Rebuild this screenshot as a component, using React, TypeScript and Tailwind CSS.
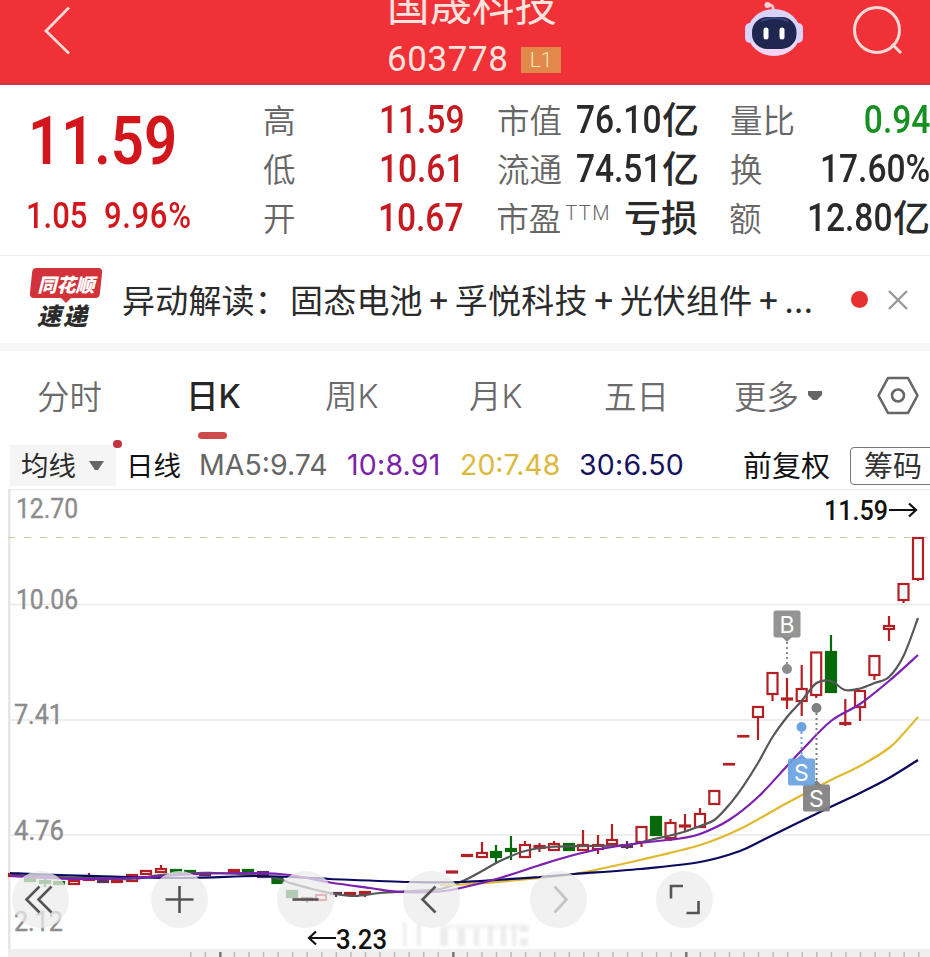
import { Fragment } from "react";
import type { ReactNode } from "react";

type Candle = {
  x: number;
  top: number;
  bottom: number;
  high?: number;
  low?: number;
  color?: "red" | "green" | "dark";
};

const candles: Candle[] = [
  { x: 14, top: 873, bottom: 876 },
  { x: 30, top: 878, bottom: 881, color: "green" },
  { x: 45, top: 880, bottom: 883, high: 877, low: 887, color: "green" },
  { x: 59, top: 881, bottom: 884, color: "green" },
  { x: 74, top: 880, bottom: 884 },
  { x: 89, top: 876, bottom: 880, high: 873 },
  { x: 103, top: 879, bottom: 882, color: "dark" },
  { x: 117, top: 880, bottom: 882 },
  { x: 132, top: 874, bottom: 881 },
  { x: 146, top: 870, bottom: 874 },
  { x: 161, top: 868, bottom: 872, high: 865 },
  { x: 176, top: 869, bottom: 872, color: "green" },
  { x: 190, top: 870, bottom: 874, color: "green" },
  { x: 205, top: 872, bottom: 875, color: "dark" },
  { x: 234, top: 869, bottom: 872 },
  { x: 248, top: 869, bottom: 873, color: "green" },
  { x: 263, top: 871, bottom: 877, color: "dark" },
  { x: 277.5, top: 877, bottom: 883, color: "green" },
  { x: 292, top: 890, bottom: 897, color: "green" },
  { x: 307, top: 898, bottom: 900, low: 903, color: "dark" },
  { x: 321, top: 894, bottom: 900 },
  { x: 336, top: 893, bottom: 894, low: 897, color: "dark" },
  { x: 350, top: 892, bottom: 895 },
  { x: 365, top: 891, bottom: 894, low: 897 },
  { x: 452, top: 871.5, bottom: 872.5 },
  { x: 467, top: 855, bottom: 856 },
  { x: 482, top: 852, bottom: 857, high: 842 },
  { x: 496, top: 851, bottom: 857, high: 845, low: 863, color: "green" },
  { x: 511, top: 848, bottom: 851, high: 836, low: 860, color: "green" },
  { x: 525, top: 844, bottom: 857, high: 841, low: 858 },
  { x: 539.5, top: 846, bottom: 848, high: 843, low: 852 },
  { x: 554, top: 843, bottom: 850, high: 841 },
  { x: 569, top: 843, bottom: 850, color: "green" },
  { x: 583, top: 844, bottom: 850, high: 830 },
  { x: 598, top: 844, bottom: 849, high: 835, low: 854 },
  { x: 612, top: 839, bottom: 844, high: 824 },
  { x: 627, top: 845, bottom: 847, high: 841, low: 849, color: "dark" },
  { x: 641.5, top: 826, bottom: 842, low: 847 },
  { x: 656, top: 816, bottom: 835, color: "green" },
  { x: 670.5, top: 822, bottom: 838, high: 819, low: 841 },
  { x: 685, top: 825.5, bottom: 826.5, high: 814, low: 831 },
  { x: 700, top: 813, bottom: 827, high: 808 },
  { x: 714.3, top: 790, bottom: 804 },
  { x: 729, top: 764, bottom: 764.5 },
  { x: 743.3, top: 736, bottom: 736.5 },
  { x: 758, top: 706, bottom: 717, low: 740 },
  { x: 772.5, top: 672, bottom: 694, low: 701 },
  { x: 787, top: 698.5, bottom: 699.5, high: 678, low: 709 },
  { x: 801.7, top: 688, bottom: 701, high: 665, low: 716 },
  { x: 816.2, top: 651.5, bottom: 695, low: 698 },
  { x: 831, top: 651, bottom: 692, high: 635, color: "green" },
  { x: 845.3, top: 723, bottom: 724, high: 699, low: 726 },
  { x: 860, top: 690, bottom: 707, low: 721 },
  { x: 874.4, top: 655, bottom: 675, low: 680 },
  { x: 889, top: 625, bottom: 629, high: 616, low: 641 },
  { x: 903.5, top: 583, bottom: 600, low: 603 },
  { x: 918, top: 537, bottom: 579, low: 581 },
];

const strokes = { red: "#b51f24", green: "#066a0b", dark: "#5a3357" };

const ma5: number[][] = [
  [10, 875], [60, 877], [130, 879], [160, 875], [215, 873], [270, 877], [290, 883], [312, 889], [335, 894], [355, 896],
  [380, 893], [410, 891], [440, 889], [465, 880], [482, 871], [500, 861], [525, 851], [550, 847], [590, 846],
  [627, 845], [650, 840], [680, 833], [700, 826], [714.3, 820], [729, 805], [743.3, 786], [758, 763], [772.5, 737],
  [787, 717], [801.5, 701], [816.5, 683], [831, 681], [845, 690], [860, 688.5], [874.5, 683], [889, 677],
  [903.5, 656], [918, 618],
];
const ma10: number[][] = [
  [10, 876], [75, 879], [130, 878], [210, 873.5], [280, 874], [330, 882.5], [370, 888], [400, 892], [440, 891.5],
  [465, 887], [500, 878], [540, 865], [570, 856], [600, 849], [640, 843], [680, 838.5], [700, 834], [729, 820],
  [758, 797], [787, 766], [801, 751], [831, 721], [860, 704], [889, 681], [918, 655],
];
const ma20: number[][] = [
  [440, 885], [470, 884], [540, 878], [580, 873], [640, 860], [700, 845], [740, 829], [787, 803], [831, 780],
  [860, 766], [889, 748], [903, 734], [918, 717],
];
const ma30: number[][] = [
  [10, 873], [60, 875], [180, 878], [260, 876], [330, 879], [410, 882], [460, 882], [540, 877], [574, 874],
  [640, 869], [700, 862], [740, 851], [767, 838], [816, 814], [860, 793], [889, 778], [918, 760],
];

// Catmull-Rom to bezier, keeps the averages smooth through every point
function smooth(points: number[][]) {
  let d = `M${points[0][0]} ${points[0][1]}`;
  for (let i = 0; i < points.length - 1; i++) {
    const p0 = points[i - 1] ?? points[i];
    const p1 = points[i];
    const p2 = points[i + 1];
    const p3 = points[i + 2] ?? p2;
    d += ` C${p1[0] + (p2[0] - p0[0]) / 6} ${p1[1] + (p2[1] - p0[1]) / 6} ${p2[0] - (p3[0] - p1[0]) / 6} ${p2[1] - (p3[1] - p1[1]) / 6} ${p2[0]} ${p2[1]}`;
  }
  return d;
}

const axisLabels = [
  { text: "12.70", x: 16, y: 517.5, w: 62 },
  { text: "10.06", x: 16, y: 608.5, w: 62 },
  { text: "7.41", x: 14, y: 724, w: 49 },
  { text: "4.76", x: 14, y: 840, w: 50 },
  { text: "2.12", x: 14, y: 931, w: 49 },
];

function Marker({ x, y, dotY, label, fill }: { x: number; y: number; dotY: number; label: string; fill: string }) {
  const below = dotY > y;
  const tip = below ? y + 13 : y - 13;
  return (
    <g>
      <line x1={x} x2={x} y1={dotY} y2={tip} stroke={fill} strokeWidth="2" strokeDasharray="2 3" />
      <circle cx={x} cy={dotY} r="5" fill={fill} />
      <path d={below ? `M${x - 5} ${tip}h10l-5 5z` : `M${x - 5} ${tip}h10l-5 -5z`} fill={fill} />
      <rect x={x - 13.5} y={y - 13.5} width="27" height="27" rx="2" fill={fill} fillOpacity="0.93" />
      <text x={x} y={y + 8.5} textAnchor="middle" fontSize="23" fill="#fff" className="font-['Inter']">{label}</text>
    </g>
  );
}

function Chart() {
  return (
    <svg viewBox="0 489 930 468" width="930" height="468" className="block font-['Roboto',sans-serif]">
      <rect x="8" y="489" width="2.5" height="461" fill="#e6e6e6" />
      <path d="M10 489.5H930M10 604.5H930M10 720H930M10 835H930" stroke="#e9e9e9" strokeWidth="1.3" />
      <path d="M8 537.5H930" stroke="#cbc9a8" strokeWidth="1.2" strokeDasharray="7 9" />
      <rect x="8" y="949" width="922" height="8" fill="#efefef" />
      {Array.from({ length: 51 }, (_, i) => {
        const major = i === 2 || i === 18 || i === 34;
        return <rect key={i} x={190 + i * 14.56} y="952" width={major ? 2.5 : 1.5} height="5" fill={major ? "#777" : "#bcbcbc"} />;
      })}

      {axisLabels.map((l) => (
        <text key={l.text} x={l.x} y={l.y} textLength={l.w} lengthAdjust="spacingAndGlyphs" fontSize="28" fill="#8c8c8c" stroke="#8c8c8c" strokeWidth="0.4">{l.text}</text>
      ))}

      {candles.map((c) => {
        const color = strokes[c.color ?? "red"];
        const h = c.bottom - c.top;
        return (
          <g key={c.x} stroke={color} strokeWidth="2.2">
            {c.high && <line x1={c.x} x2={c.x} y1={c.high} y2={c.top} />}
            {c.low && <line x1={c.x} x2={c.x} y1={c.bottom} y2={c.low} />}
            <rect
              x={c.x - 5}
              y={c.top + (h > 2 ? 1 : 0)}
              width="10"
              height={h > 2 ? h - 1 : h}
              fill={h <= 2 || c.color ? color : "#fff"}
            />
          </g>
        );
      })}

      <g fill="none" strokeWidth="2.2" strokeLinejoin="round">
        <path d={smooth(ma5)} stroke="#555759" />
        <path d={smooth(ma20)} stroke="#e0b92e" />
        <path d={smooth(ma30)} stroke="#0c0a5e" />
        <path d={smooth(ma10)} stroke="#7d1fb0" />
      </g>

      <Marker x={787} y={624} dotY={669} label="B" fill="#8c8c8c" />
      <Marker x={816.5} y={798} dotY={708} label="S" fill="#808080" />
      <Marker x={801.5} y={772} dotY={727} label="S" fill="#6aa3e0" />

      <g fill="#111" fontSize="28" fontWeight="500">
        <text x="824" y="520" textLength="64" lengthAdjust="spacingAndGlyphs">11.59</text>
        <text x="336" y="948.5" textLength="51" lengthAdjust="spacingAndGlyphs">3.23</text>
      </g>
      <path d="M889 510H916M909 503.500L916 510L909 516.500M336 938H309M316 931.500L309 938L316 944.500" fill="none" stroke="#111" strokeWidth="2.200" />

      {/* faded stamp under the toolbar */}
      <g fill="#ececec" className="blur-[1.5px]">
        <path d="M403 922h3v24h-3zM417 922h4v24h-4z" />
        <path d="M440 924h88v5h-88z" opacity=".6" />
        <path d="M440 928h8v18h-8zM458 928h7v18h-7zM474 928h5v18h-5zM488 926h5v20h-5zM501 926h5v20h-5zM512 926h4v20h-4zM520 926h8v6h-8zM520 938h8v8h-8z" />
      </g>
    </svg>
  );
}

const tools = [
  { name: "earliest", d: "M-1-13L-14 0L-1 13M11-13L-2 0L11 13", color: "#555" },
  { name: "zoom in", d: "M-14 0H14M0-13.500V13.500", color: "#555" },
  { name: "zoom out", d: "M-13 0H13", color: "#5a5050" },
  { name: "previous", d: "M4-13L-9 0L4 13", color: "#555" },
  { name: "next", d: "M-4-13L8 0L-4 13", color: "#c4c4c4" },
  { name: "fullscreen", d: "M-1.500-13.500H-13.500V-1M2 13.500H14V1.500", color: "#555" },
];

function Toolbar() {
  return (
    <div className="absolute left-3 top-[382px] flex gap-[69.3px]">
      {tools.map((t) => (
        <button key={t.name} aria-label={t.name} className="size-[57px] shrink-0 rounded-full bg-[#ececec]/75 first:mr-[12.5px]">
          <svg viewBox="-28.5 -28.5 57 57" className="size-full" fill="none" stroke={t.color} strokeWidth="2.600">
            <path d={t.d} />
          </svg>
        </button>
      ))}
    </div>
  );
}

function Header() {
  return (
    <header className="flex h-[85px] border-b-2 border-[#c23d44] bg-[#f13138]">
      <svg width="110" height="83" className="shrink-0" fill="none" stroke="#ffd9d6" strokeWidth="2.800">
        <path d="M69 7.500L46 31L69 53.500" />
      </svg>
      <div className="ml-[277px] w-[343px] shrink-0 whitespace-nowrap text-[#ffe3df]">
        <div className="-mt-[22px] h-[66px] text-[42.5px] leading-[49px]">国晟科技</div>
        <div className="-mt-0.5 flex items-center">
          <span className="w-[134px] font-['Roboto'] text-[35px] leading-9 tracking-[0.6px]">603778</span>
          <span className="h-[26px] w-10 bg-[#e0894a] text-center font-['Roboto'] text-[21px] font-light leading-[27px] text-[#ffe9b8]">L1</span>
        </div>
      </div>
      <svg width="200" height="83" className="shrink-0" viewBox="730 0 200 83" fill="none">
        <path d="M774 12C772 9 775 5 769 5" stroke="#f3c3d8" strokeWidth="3" />
        <circle cx="767.500" cy="5" r="3" fill="#ffd4d4" />
        <rect x="745" y="23" width="10" height="20" rx="5" fill="#ded2fa" />
        <rect x="793" y="23" width="10" height="20" rx="5" fill="#ded2fa" />
        <ellipse cx="774" cy="32.500" rx="26.500" ry="23.500" fill="#d9d2fa" />
        <path d="M752 42C757 60 791 60 797 42" fill="#f3d6f4" />
        <rect x="752" y="17" width="44.500" height="32" rx="15" fill="#1f2650" />
        <path d="M761 21Q774 15 788 21" stroke="#394478" strokeWidth="2" />
        <rect x="763.500" y="27.500" width="5" height="12" rx="2.500" fill="#fff" />
        <rect x="779.500" y="27.500" width="5" height="12" rx="2.500" fill="#fff" />
        <circle cx="877" cy="30" r="22.500" stroke="#ffd9d6" strokeWidth="3" />
        <path d="M892 44L901 53" stroke="#ffd9d6" strokeWidth="3" />
      </svg>
    </header>
  );
}

// Narrow DIN-like figures
function Num({ children, className = "" }: { children: ReactNode; className?: string }) {
  return <span className={`inline-block scale-x-[0.86] whitespace-nowrap font-['Roboto'] font-medium ${className}`}>{children}</span>;
}

const quoteRows = [
  { a: "高", av: "11.59", b: "市值", bv: "76.10", bu: "亿", c: "量比", cv: "0.94", cu: "" },
  { a: "低", av: "10.61", b: "流通", bv: "74.51", bu: "亿", c: "换", cv: "17.60%", cu: "" },
  { a: "开", av: "10.67", b: "市盈", bv: "", bu: "亏损", c: "额", cv: "12.80", cu: "亿" },
];

function Quote() {
  return (
    <section className="flex h-[171px] border-b border-[#ececec]">
      <div className="w-[263px] shrink-0 text-[#d3161b]">
        <div className="h-[110px] pl-[28px] pt-[22px]">
          <Num className="origin-left text-[67.5px] font-semibold leading-[68px]">11.59</Num>
        </div>
        <div className="flex pl-[26px] text-[36px] leading-[42px]">
          <Num className="w-[78px] origin-left">1.05</Num>
          <Num className="origin-left tracking-[0.8px]">9.96%</Num>
        </div>
      </div>
      <div className="w-[667px] shrink-0 pt-[11px]">
        {quoteRows.map((r) => (
          <div key={r.a} className="flex h-[49px] items-center whitespace-nowrap text-[32.5px] leading-[44px] text-[#666]">
            <span className="-mt-1 w-[101px] font-[350]">{r.a}</span>
            <span className="-mt-0.5 flex w-[102px] justify-end text-[39px] text-[#c41a20]"><Num className="origin-right">{r.av}</Num></span>
            <span className="-mt-1 ml-[33px] flex w-[112px] font-[350]">
              {r.b}
              {r.bv === "" && <span className="-mt-1 ml-1 font-['Roboto'] text-[20px] font-light tracking-[1.5px]">TTM</span>}
            </span>
            <span className="-mt-0.5 flex w-[91px] items-center justify-end text-[39px] text-[#2a2a2a]">
              {r.bv && <Num className="origin-right">{r.bv}</Num>}
              <span className="-mt-1 text-[37px] font-medium">{r.bu}</span>
            </span>
            <span className="-mt-1 ml-[31px] w-[70px] font-[350]">{r.c}</span>
            <span className={`-mt-0.5 flex w-[132px] items-center justify-end text-[39px] ${r.cv === "0.94" ? "text-[#179022]" : "text-[#2a2a2a]"}`}>
              <Num className="origin-right">{r.cv}</Num>
              {r.cu && <span className="-mt-1 text-[37px] font-medium">{r.cu}</span>}
            </span>
          </div>
        ))}
      </div>
    </section>
  );
}

const topics = ["固态电池", "孚悦科技", "光伏组件"];

function News() {
  return (
    <section className="flex h-[95px] items-center border-b-8 border-[#f7f7f7] text-[#2b2b2b]">
      <div className="ml-[31px] w-[91px] shrink-0 whitespace-nowrap font-black italic">
        <div className="relative -mt-1 h-[30px] w-[70px]">
          <div className="absolute inset-0 -skew-x-6 rounded-sm bg-[#d2323a]" />
          <div className="absolute left-[29px] top-[29px] border-x-[6px] border-t-[6px] border-x-transparent border-t-[#d2323a]" />
          <div className="relative text-center text-[19px] leading-[31px] text-white">同花顺</div>
        </div>
        <div className="mt-[5px] pl-[6px] text-[24px] leading-[24px] tracking-[2px]">速递</div>
      </div>
      <div className="w-[729px] shrink-0 whitespace-nowrap text-[33px] tracking-[0.2px]">
        <span className="mr-0.5">异动解读：</span>
        {topics.map((t) => (
          <Fragment key={t}>
            <span>{t}</span>
            <span className="mx-[6.5px] inline-block w-[19px] text-center font-medium">+</span>
          </Fragment>
        ))}
        <span className="tracking-[0.5px]">...</span>
      </div>
      <span className="size-[17px] shrink-0 rounded-full bg-[#e5322f]" />
      <svg width="20" height="20" className="ml-5 shrink-0" stroke="#999" strokeWidth="2.400">
        <path d="M1 1L19 19M19 1L1 19" />
      </svg>
    </section>
  );
}

function Tabs() {
  return (
    <nav className="flex h-[91px] items-center whitespace-nowrap pb-0.5 text-[32.5px] font-[350] text-[#6b6b6b]">
      <span className="ml-[37px] w-[149px]">分时</span>
      <span className="relative w-[139px] font-medium text-[#262626]">
        日<span className="font-['Inter']">K</span>
        <span className="absolute -bottom-[18px] left-[12px] h-[7px] w-[29px] rounded-full bg-[#cf4b4b]" />
      </span>
      <span className="w-[144px]">周<span className="font-['Inter'] font-light">K</span></span>
      <span className="w-[135px]">月<span className="font-['Inter'] font-light">K</span></span>
      <span className="w-[130px]">五日</span>
      <span className="w-[73px]">更多</span>
      <svg width="16" height="11" className="shrink-0" fill="#666"><path d="M1 1h14v4l-5 5h-4l-5-5z" /></svg>
      <svg width="44" height="40" viewBox="0 0 44 40" className="-mt-px ml-[53px] shrink-0" fill="none" stroke="#666" strokeWidth="2.600">
        <path d="M12 3H32L41.500 20.500L32 38H12L2.500 20.500Z" strokeLinejoin="round" />
        <circle cx="22" cy="20.500" r="6" />
      </svg>
    </nav>
  );
}

function Averages() {
  return (
    <section className="relative flex h-[47px] items-center whitespace-nowrap text-[27.5px] text-[#111]">
      <div className="ml-2.5 flex h-[41px] w-[106px] shrink-0 items-center bg-[#f5f5f5] pl-[11px] text-[#2b2b2b]">
        <span className="-mt-0.5">均线</span>
        <svg width="15" height="11" className="ml-[13px]" fill="#666"><path d="M0 1h15L9 10h-3z" /></svg>
      </div>
      <span className="absolute left-[113px] top-[-2px] h-[8px] w-[9px] rounded-sm bg-[#c2333f]" />
      <span className="-mt-0.5 ml-[10px] w-[73px] shrink-0">日线</span>
      <div className="flex shrink-0 font-['Inter'] text-[28.5px]">
        <span className="w-[148px] text-[#666]">MA5:9.74</span>
        <span className="w-[113px] tracking-[0.2px] text-[#7a22a8]">10:8.91</span>
        <span className="w-[119px] text-[#dcb93c]">20:7.48</span>
        <span className="w-[164px] tracking-[0.2px] text-[#15125e]">30:6.50</span>
      </div>
      <span className="-mt-0.5 w-[107px] shrink-0 text-[29px]">前复权</span>
      <span className="h-[38px] w-[90px] shrink-0 rounded border-[1.5px] border-[#777] pl-[13px] text-[29px] leading-[33px] text-[#333]">筹码</span>
    </section>
  );
}

export default function App() {
  return (
    <main className="h-[957px] w-[930px] overflow-hidden bg-white font-['Noto_Sans_CJK_SC',sans-serif]">
      <Header />
      <Quote />
      <News />
      <Tabs />
      <Averages />
      <div className="relative">
        <Chart />
        <Toolbar />
      </div>
    </main>
  );
}
